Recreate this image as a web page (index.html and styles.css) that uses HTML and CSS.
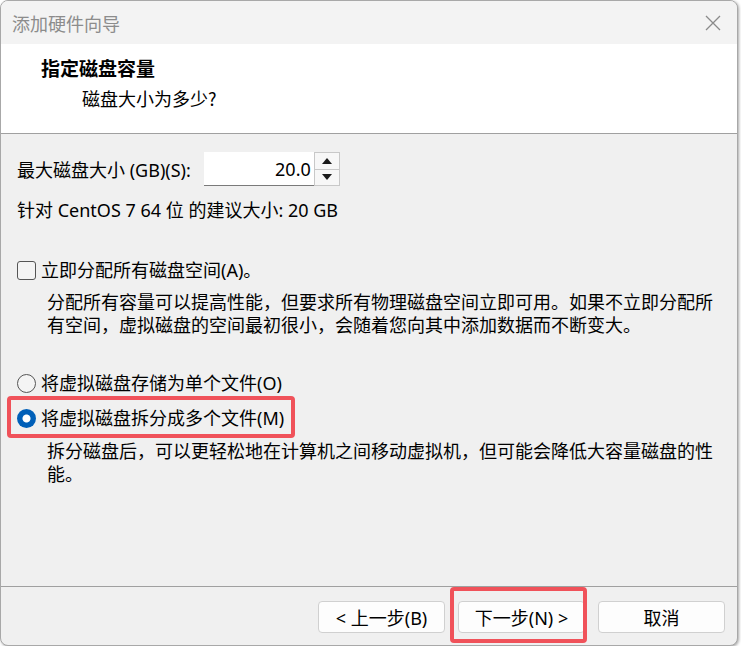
FILE: index.html
```html
<!DOCTYPE html>
<html lang="zh-CN">
<head>
    <meta charset="UTF-8">
    <title>添加硬件向导</title>
    <link rel="stylesheet" href="styles.css">
</head>
<body>
    <div class="window">
        <!-- Title bar -->
        <div class="titlebar">
            <span class="title">添加硬件向导</span>
            <svg class="close" width="16" height="16" viewBox="0 0 16 16">
                <path d="M1 1 L15 15 M15 1 L1 15" stroke="#8a8a8a" stroke-width="1.3" fill="none"/>
            </svg>
        </div>

        <!-- Wizard page header -->
        <div class="header">
            <div class="header-title">指定磁盘容量</div>
            <div class="header-sub">磁盘大小为多少?</div>
        </div>

        <!-- Page body -->
        <div class="content">
            <div class="size-row">
                <label>最大磁盘大小 (GB)(S):</label>
                <div class="spin">
                    <div class="spin-value">20.0</div>
                    <div class="spin-buttons">
                        <div class="spin-btn">
                            <svg width="12" height="8" viewBox="0 0 12 8"><path d="M6 1 L11 7 L1 7 Z" fill="#1a1a1a"/></svg>
                        </div>
                        <div class="spin-btn">
                            <svg width="12" height="8" viewBox="0 0 12 8"><path d="M1 1 L11 1 L6 7 Z" fill="#1a1a1a"/></svg>
                        </div>
                    </div>
                </div>
            </div>
            <div class="hint">针对 CentOS 7 64 位 的建议大小: 20 GB</div>

            <div class="option option-check">
                <span class="checkbox"></span>
                <span>立即分配所有磁盘空间(A)。</span>
            </div>
            <p class="desc">分配所有容量可以提高性能，但要求所有物理磁盘空间立即可用。如果不立即分配所有空间，虚拟磁盘的空间最初很小，会随着您向其中添加数据而不断变大。</p>

            <div class="option option-first">
                <span class="radio"></span>
                <span>将虚拟磁盘存储为单个文件(O)</span>
            </div>
            <div class="option option-second marked">
                <span class="radio checked"></span>
                <span>将虚拟磁盘拆分成多个文件(M)</span>
            </div>
            <p class="desc desc-split">拆分磁盘后，可以更轻松地在计算机之间移动虚拟机，但可能会降低大容量磁盘的性能。</p>
        </div>

        <!-- Buttons -->
        <div class="footer">
            <button>&lt; 上一步(B)</button>
            <button class="marked">下一步(N) &gt;</button>
            <button>取消</button>
        </div>
    </div>
</body>
</html>
```

FILE: styles.css
```css
body {
    margin: 0;
    background: #ffffff;
    font-family: "Noto Sans", "Noto Sans CJK SC", sans-serif;
    font-size: 18px;
    color: #000;
}

.window {
    width: 736px;
    height: 644px;
    border: 1px solid #a8a8a8;
    border-radius: 8px;
    overflow: hidden;
    display: flex;
    flex-direction: column;
    background: #f0f0f0;
    box-shadow: 1px 1px 3px rgba(0, 0, 0, 0.35);
}

.titlebar {
    height: 43px;
    flex-shrink: 0;
    background: #f3f3f3;
    display: flex;
    align-items: center;
    justify-content: space-between;
    padding: 0 16px 0 11px;
}

.title {
    color: #8c8c8c;
    font-family: "Noto Sans CJK SC", sans-serif;
    font-size: 18px;
}

.header {
    flex-shrink: 0;
    background: #ffffff;
    border-bottom: 1px solid #a0a0a0;
    padding: 12px 0 0 40px;
    box-sizing: border-box;
    height: 90px;
    font-family: "Noto Sans CJK SC", sans-serif;
}

.header-title {
    font-size: 19px;
    font-weight: bold;
    line-height: 24px;
}

.header-sub {
    font-size: 18px;
    line-height: 24px;
    margin: 6px 0 0 41px;
}

.content {
    flex: 1;
    padding: 18px 17px 0 16px;
}

.size-row {
    display: flex;
    align-items: center;
    gap: 13px;
}

.spin {
    display: flex;
    height: 34px;
}

.spin-value {
    width: 107px;
    background: #ffffff;
    border-bottom: 1px solid #7a7a7a;
    text-align: right;
    line-height: 34px;
    padding-right: 3px;
}

.spin-buttons {
    display: flex;
    flex-direction: column;
    width: 26px;
}

.spin-btn {
    flex: 1;
    border: 1px solid #c8c8c8;
    background: #f7f7f7;
    display: flex;
    align-items: center;
    justify-content: center;
}

.spin-btn + .spin-btn {
    border-top: none;
}

.hint {
    margin-top: 12px;
    line-height: 24px;
}

.option {
    display: flex;
    align-items: center;
    gap: 5px;
    line-height: 24px;
    position: relative;
}

.option-check {
    margin-top: 36px;
}

.option-first {
    margin-top: 35px;
}

.option-second {
    margin-top: 11px;
}

.checkbox {
    width: 17px;
    height: 17px;
    border: 1px solid #555555;
    border-radius: 3px;
    background: #f4f4f4;
}

.radio {
    width: 17px;
    height: 17px;
    border: 1px solid #555555;
    border-radius: 50%;
    background: #f4f4f4;
}

.radio.checked {
    width: 19px;
    height: 19px;
    border: none;
    background: radial-gradient(circle, #ffffff 0 3.5px, #005fb8 4.5px);
}

.desc {
    margin: 8px 0 0 30px;
    width: 674px;
    font-size: 18px;
    line-height: 23px;
    font-family: "Noto Sans CJK SC", sans-serif;
}

.desc-split {
    margin-top: 9px;
}

/* red annotation frames */
.marked::after {
    content: "";
    position: absolute;
    border: 4px solid #f0525a;
    border-radius: 4px;
    pointer-events: none;
}

.option.marked::after {
    left: -10px;
    top: -10px;
    width: 280px;
    height: 34px;
}

.footer {
    height: 59px;
    box-sizing: border-box;
    flex-shrink: 0;
    border-top: 1px solid #a0a0a0;
    display: flex;
    justify-content: flex-end;
    align-items: flex-start;
    gap: 13px;
    padding: 14px 12px 0 0;
}

button {
    width: 127px;
    height: 32px;
    background: #fdfdfd;
    border: 1px solid #d0d0d0;
    border-radius: 4px;
    font-family: "Noto Sans", "Noto Sans CJK SC", sans-serif;
    font-size: 18px;
    color: #000;
    padding: 0;
    position: relative;
}

button.marked::after {
    left: -9px;
    top: -15px;
    width: 129px;
    height: 48px;
}
```
